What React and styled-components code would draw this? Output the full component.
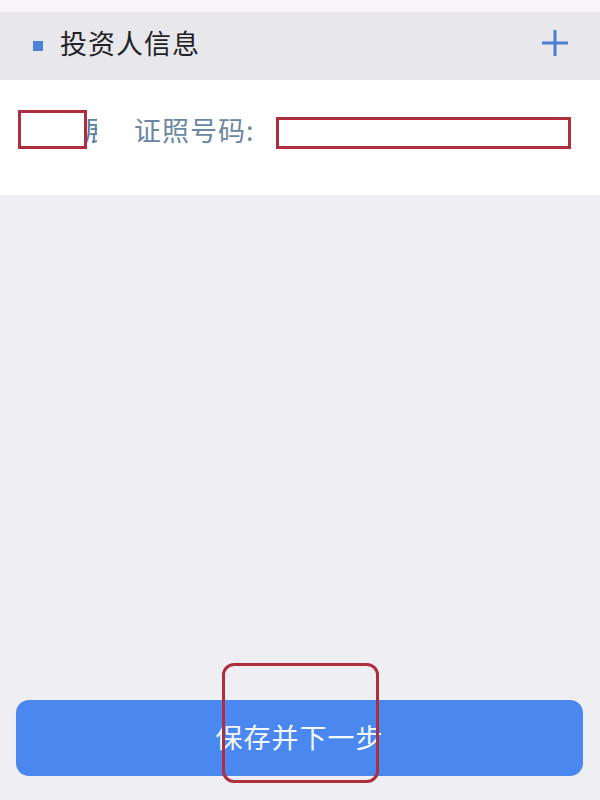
import React from "react";
import styled, { createGlobalStyle } from "styled-components";

const Global = createGlobalStyle`
  html, body { margin: 0; padding: 0; }
  body {
    background: #efeef2;
    font-family: "Noto Sans CJK SC", "Noto Sans", sans-serif;
  }
`;

const Page = styled.div`
  width: 600px;
  height: 800px;
  display: flex;
  flex-direction: column;
  background: #efeef2;
  overflow: hidden;
  position: relative;
`;

const TopStrip = styled.div`
  height: 12px;
  background: #f8f4f7;
`;

const SectionHeader = styled.div`
  height: 68px;
  background: #e8e7eb;
  display: flex;
  align-items: center;
  padding: 0 30px 0 33px;
`;

const Marker = styled.span`
  width: 10px;
  height: 10px;
  background: #4d83d6;
  margin-right: 17px;
  margin-top: 0px;
`;

const Title = styled.span`
  flex: 1;
  font-size: 27px;
  line-height: 36px;
  margin-top: -6px;
  color: #222226;
  letter-spacing: 1px;
`;

const AddButton = styled.span`
  display: flex;
  width: 30px;
  height: 30px;
  align-items: center;
  justify-content: center;
  margin-top: -6px;
`;

const InfoCard = styled.div`
  height: 115px;
  background: #ffffff;
  display: flex;
  align-items: flex-start;
  padding-top: 29px;
  box-sizing: border-box;
`;

const NameCell = styled.div`
  width: 97px;
  height: 42px;
  overflow: hidden;
  display: flex;
  justify-content: flex-end;
`;

const NameText = styled.span`
  font-size: 27px;
  line-height: 42px;
  color: #5a7ea6;
  margin-right: -14px;
`;

const RedMark = styled.div`
  position: absolute;
  box-sizing: border-box;
  border: 3px solid #ad2f3d;
  background: ${(p) => (p.$fill ? "#ffffff" : "transparent")};
  border-radius: ${(p) => p.$radius || 0}px;
`;

const Label = styled.span`
  margin-left: 37px;
  font-size: 27px;
  line-height: 42px;
  color: #6b87a3;
  letter-spacing: 1px;
`;

const Spacer = styled.div`
  flex: 1;
`;

const Footer = styled.div`
  padding: 0 17px 24px 16px;
`;

const PrimaryButton = styled.button`
  width: 100%;
  height: 76px;
  border: none;
  border-radius: 13px;
  background: #4a88ef;
  color: #f4f8ff;
  font-family: "Noto Sans CJK SC", "Noto Sans", sans-serif;
  font-size: 27px;
  letter-spacing: 1px;
  padding: 0 0 4px 0;
`;

export default function App() {
  return (
    <Page>
      <Global />
      <TopStrip />
      <SectionHeader>
        <Marker />
        <Title>投资人信息</Title>
        <AddButton>
          <svg width="30" height="30" viewBox="0 0 30 30">
            <path d="M15 2 V28 M2 15 H28" stroke="#4a7fd4" strokeWidth="3" />
          </svg>
        </AddButton>
      </SectionHeader>
      <InfoCard>
        <NameCell>
          <NameText>展</NameText>
        </NameCell>
        <Label>证照号码:</Label>
      </InfoCard>
      <Spacer />
      <Footer>
        <PrimaryButton>保存并下一步</PrimaryButton>
      </Footer>
      <RedMark $fill style={{ left: 18, top: 110, width: 69, height: 39 }} />
      <RedMark $fill style={{ left: 276, top: 117, width: 295, height: 32 }} />
      <RedMark $radius={12} style={{ left: 222, top: 663, width: 157, height: 120 }} />
    </Page>
  );
}
